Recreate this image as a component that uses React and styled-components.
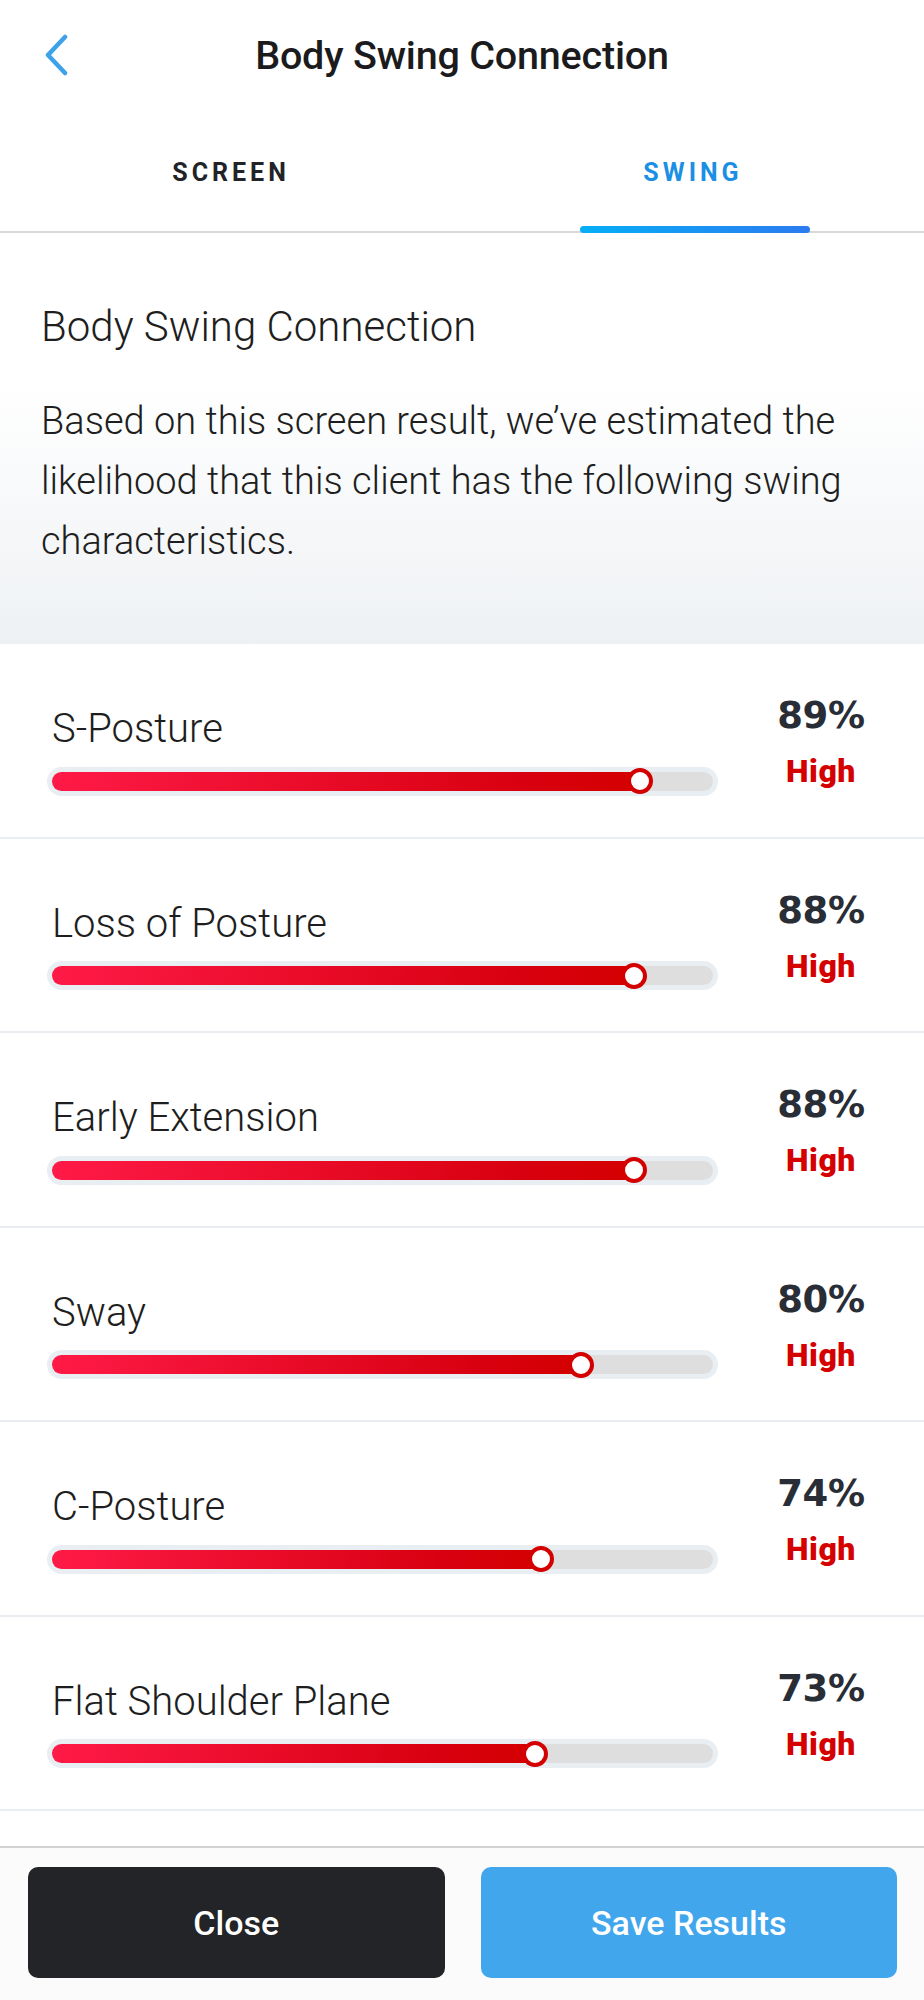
import React from "react";
import styled, { createGlobalStyle } from "styled-components";

const Global = createGlobalStyle`
  html, body { margin: 0; padding: 0; background: #fff; }
  body { font-family: Roboto, "Noto Sans", "Liberation Sans", sans-serif; -webkit-font-smoothing: antialiased; }
  * { box-sizing: border-box; }
`;

const Page = styled.div`
  width: 924px;
  height: 2000px;
  display: flex;
  flex-direction: column;
  overflow: hidden;
  background: #fff;
`;

const Header = styled.header`
  height: 110px;
  display: grid;
  grid-template-columns: 120px 1fr 120px;
  align-items: center;
`;

const BackButton = styled.button`
  border: 0;
  background: none;
  padding: 0 0 0 44px;
  height: 60px;
  display: flex;
  align-items: center;
  cursor: pointer;
  color: #3da2ea;
`;

const Title = styled.h1`
  margin: 0;
  text-align: center;
  font-size: 39.5px;
  font-weight: 500;
  color: #1b1b1d;
  letter-spacing: -0.2px;
`;

const Tabs = styled.nav`
  height: 123px;
  display: grid;
  grid-template-columns: 1fr 1fr;
  border-bottom: 2px solid #d9d9d9;
`;

const Tab = styled.div`
  position: relative;
  display: flex;
  align-items: center;
  justify-content: center;
  padding-top: 3px;
  font-size: 25px;
  font-weight: 700;
  letter-spacing: 4px;
  color: ${(p) => (p.$active ? "#1b8fe4" : "#222326")};
`;

const Indicator = styled.span`
  position: absolute;
  left: 118px;
  width: 230px;
  bottom: -2px;
  height: 7px;
  border-radius: 4px;
  background: linear-gradient(90deg, #06aef6, #2b7bf0);
`;

const Intro = styled.section`
  height: 411px;
  padding: 69px 30px 0 41px;
  background: linear-gradient(180deg, #ffffff 0%, #ffffff 36%, #eef1f4 100%);
`;

const IntroTitle = styled.h2`
  margin: 0;
  font-size: 42px;
  line-height: 50px;
  font-weight: 300;
  color: #1e1e20;
`;

const IntroText = styled.p`
  margin: 39px 0 0;
  font-size: 38px;
  line-height: 60px;
  font-weight: 300;
  color: #1e1e20;
`;

const List = styled.div`
  flex: 1;
  overflow: hidden;
`;

const Row = styled.div`
  height: 194.5px;
  display: grid;
  grid-template-columns: 671px 1fr;
  padding-left: 47px;
  border-bottom: 2px solid #eaeef2;
`;

const Left = styled.div`
  padding-top: 61px;
  display: flex;
  flex-direction: column;
`;

const Label = styled.div`
  font-size: 40px;
  line-height: 48px;
  font-weight: 300;
  color: #1e1e20;
  padding-left: 5px;
`;

const Bar = styled.div`
  margin-top: 13.5px;
  height: 29px;
  border-radius: 15px;
  background: #e9eef3;
  padding: 5px;
`;

const Track = styled.div`
  position: relative;
  height: 19px;
  border-radius: 10px;
  background: #dedede;
`;

const Fill = styled.div`
  height: 100%;
  border-radius: 10px;
  background: linear-gradient(100deg, #ff1a47 0%, #d80010 80%, #d40000 100%);
`;

const Thumb = styled.span`
  position: absolute;
  top: 50%;
  width: 26px;
  height: 26px;
  margin-left: -13px;
  margin-top: -13px;
  border-radius: 50%;
  border: 4px solid #d40000;
  background: #fff;
`;

const Right = styled.div`
  padding-top: 50px;
  display: flex;
  flex-direction: column;
  align-items: center;
`;

const Percent = styled.div`
  font-family: "DejaVu Sans", Roboto, sans-serif;
  font-size: 37px;
  line-height: 44px;
  font-weight: 700;
  color: #282d36;
  letter-spacing: -0.3px;
`;

const Level = styled.div`
  margin-top: 13px;
  font-size: 32px;
  line-height: 40px;
  font-weight: 900;
  color: #d50000;
  letter-spacing: 0.5px;
`;

const Footer = styled.footer`
  height: 154px;
  flex-shrink: 0;
  border-top: 2px solid #d3d3d3;
  background: #fbfbfb;
  padding: 19px 27px 0 28px;
  display: grid;
  grid-template-columns: 1fr 1fr;
  column-gap: 36px;
  align-content: start;
`;

const Button = styled.button`
  height: 111px;
  border: 0;
  border-radius: 10px;
  font-family: Roboto, sans-serif;
  font-size: 34px;
  font-weight: 500;
  color: #fff;
  background: ${(p) => (p.$primary ? "#42a6ec" : "#232427")};
  cursor: pointer;
`;

const items = [
  { name: "S-Posture", value: 89 },
  { name: "Loss of Posture", value: 88 },
  { name: "Early Extension", value: 88 },
  { name: "Sway", value: 80 },
  { name: "C-Posture", value: 74 },
  { name: "Flat Shoulder Plane", value: 73 },
];

function Chevron() {
  return (
    <svg width="26" height="42" viewBox="0 0 26 42" fill="none">
      <path d="M21 3 L4 21 L21 39" stroke="currentColor" strokeWidth="4.5" strokeLinecap="round" strokeLinejoin="round" />
    </svg>
  );
}

function ResultRow({ name, value }) {
  return (
    <Row>
      <Left>
        <Label>{name}</Label>
        <Bar>
          <Track>
            <Fill style={{ width: `${value}%` }} />
            <Thumb style={{ left: `${value}%` }} />
          </Track>
        </Bar>
      </Left>
      <Right>
        <Percent>{value}%</Percent>
        <Level>High</Level>
      </Right>
    </Row>
  );
}

export default function App() {
  return (
    <Page>
      <Global />
      <Header>
        <BackButton aria-label="Back">
          <Chevron />
        </BackButton>
        <Title>Body Swing Connection</Title>
        <span />
      </Header>
      <Tabs>
        <Tab>SCREEN</Tab>
        <Tab $active>
          SWING
          <Indicator />
        </Tab>
      </Tabs>
      <Intro>
        <IntroTitle>Body Swing Connection</IntroTitle>
        <IntroText>
          Based on this screen result, we’ve estimated the likelihood that this client has the following swing characteristics.
        </IntroText>
      </Intro>
      <List>
        {items.map((it) => (
          <ResultRow key={it.name} {...it} />
        ))}
      </List>
      <Footer>
        <Button>Close</Button>
        <Button $primary>Save Results</Button>
      </Footer>
    </Page>
  );
}
